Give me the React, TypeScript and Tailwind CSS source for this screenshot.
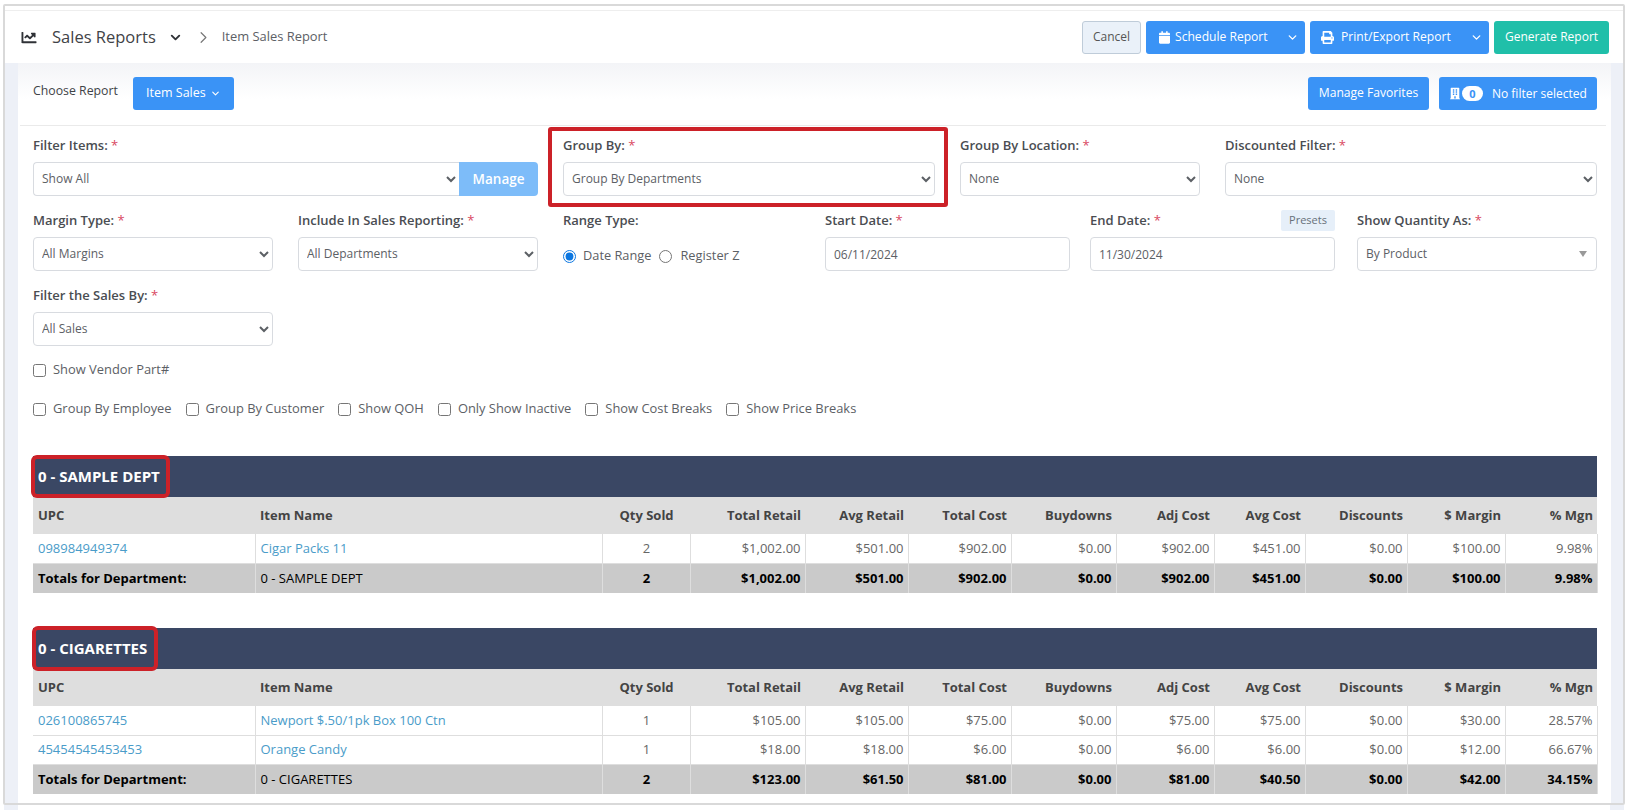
import { ChevronDown, ChevronRight } from "lucide-react";
import { FaBuilding, FaCalendar, FaChartLine, FaPrint } from "react-icons/fa";

const selectCls =
  "w-full h-[34px] pl-[4px] pr-[6px] pb-[2px] bg-white border border-[#d8dbe0] rounded-[4px] text-[12px] text-[#5c6065]";
const inputCls =
  "w-full h-[34px] pl-[8px] bg-white border border-[#d8dbe0] rounded-[4px] text-[12px] text-[#5c6065]";
const blueBtn = "h-[33px] bg-[#3a93f6] rounded-[3px] text-white";

const columns = [
  { label: "UPC", w: "w-[222px]", align: "text-left" },
  { label: "Item Name", w: "w-[347px]", align: "text-left" },
  { label: "Qty Sold", w: "w-[88px]", align: "text-center" },
  { label: "Total Retail", w: "w-[115px]", align: "text-right" },
  { label: "Avg Retail", w: "w-[103px]", align: "text-right" },
  { label: "Total Cost", w: "w-[103px]", align: "text-right" },
  { label: "Buydowns", w: "w-[105px]", align: "text-right" },
  { label: "Adj Cost", w: "w-[98px]", align: "text-right" },
  { label: "Avg Cost", w: "w-[91px]", align: "text-right" },
  { label: "Discounts", w: "w-[102px]", align: "text-right" },
  { label: "$ Margin", w: "w-[98px]", align: "text-right" },
  { label: "% Mgn", w: "w-[92px]", align: "text-right" },
];

const Req = () => <span className="text-[#d9485f] font-normal"> *</span>;

const Label = ({ text, req = true }: { text: string; req?: boolean }) => (
  <label className="block h-[18px] leading-[18px] text-[13px] font-semibold text-[#4a4d52] whitespace-nowrap">
    {text}
    {req && <Req />}
  </label>
);

const SelectField = ({ label, value, className }: { label: string; value: string; className: string }) => (
  <div className={className}>
    <Label text={label} />
    <select className={`${selectCls} mt-[8px]`} defaultValue={value}>
      <option>{value}</option>
    </select>
  </div>
);

const Check = ({ text }: { text: string }) => (
  <label className="flex items-center gap-[7px] h-[20px] text-[12.9px] text-[#5c6065] whitespace-nowrap">
    <input type="checkbox" className="w-[13px] h-[13px]" />
    {text}
  </label>
);

const Dept = ({
  title,
  rows,
  totals,
  titleCls,
}: {
  title: string;
  rows: string[][];
  totals: string[];
  titleCls: string;
}) => (
  <div>
    <div className="h-[41px] bg-[#3a4764] flex items-center">
      <span
        className={`${titleCls} flex items-center rounded-[2px] outline-[4px] outline-solid outline-[#cc2128] text-white text-[15px] font-bold whitespace-nowrap`}
      >
        {title}
      </span>
    </div>
    <table className="w-full table-fixed border-collapse text-[13px]">
      <thead>
        <tr className="h-[37px] bg-[#dedede] text-[#444]">
          {columns.map((c) => (
            <th key={c.label} className={`${c.w} ${c.align} font-bold pl-[5px] pr-[4px]`}>
              {c.label}
            </th>
          ))}
        </tr>
      </thead>
      <tbody>
        {rows.map((r) => (
          <tr key={r[0]} className="h-[29px] bg-white text-[#666] border-b border-[#dedede]">
            {r.map((v, i) => (
              <td
                key={i}
                className={`${columns[i].align} pl-[5px] pr-[4px] border-r border-[#dedede] ${i < 2 ? "text-[#4a9cc9]" : ""}`}
              >
                {v}
              </td>
            ))}
          </tr>
        ))}
        <tr className="h-[30px] bg-[#cacaca] text-black">
          {totals.map((v, i) => (
            <td
              key={i}
              className={`${columns[i].align} pl-[5px] pr-[4px] border-r border-[#dedede] ${i === 1 ? "font-normal" : "font-bold"}`}
            >
              {v}
            </td>
          ))}
        </tr>
      </tbody>
    </table>
  </div>
);

export default function App() {
  return (
    <div className="w-[1629px] h-[810px] overflow-hidden bg-white pt-[4px] pl-[3px] pr-[4px] font-['Open_Sans',sans-serif]">
      <div className="h-[801px] border-2 border-[#d9d9d9] rounded-[2px] flex flex-col">
        {/* top bar */}
        <div className="pt-[4px] bg-white">
          <div className="h-[53px] border-t border-[#eeeeee] pl-[15px] pr-[14px] flex items-center">
            <FaChartLine className="w-[18px] h-[15px] text-[#2f3237]" />
            <span className="ml-[14px] text-[16.5px] text-[#3f4347]">Sales Reports</span>
            <ChevronDown className="ml-[12px] w-[15px] h-[15px] text-[#2f3237]" strokeWidth={3} />
            <ChevronRight className="ml-[11px] w-[19px] h-[19px] text-[#777]" strokeWidth={1.5} />
            <span className="ml-[9px] text-[12.9px] text-[#5c6065]">Item Sales Report</span>
            <div className="ml-auto flex items-center gap-[5px]">
              <button className="w-[59px] h-[33px] bg-[#eaf1f9] border border-[#bfccd9] rounded-[3px] text-[12px] text-[#555]">
                Cancel
              </button>
              <button className={`${blueBtn} w-[159px] pl-[13px] pr-[6px] flex items-center`}>
                <FaCalendar className="w-[11px] h-[13px]" />
                <span className="ml-[5px] text-[12.1px]">Schedule Report</span>
                <ChevronDown className="ml-auto w-[13px] h-[13px]" strokeWidth={2.5} />
              </button>
              <button className={`${blueBtn} w-[179px] pl-[11px] pr-[6px] flex items-center`}>
                <FaPrint className="w-[13px] h-[13px]" />
                <span className="ml-[7px] text-[12.1px]">Print/Export Report</span>
                <ChevronDown className="ml-auto w-[13px] h-[13px]" strokeWidth={2.5} />
              </button>
              <button className="w-[115px] h-[33px] bg-[#20bfa9] rounded-[3px] text-white text-[12px]">
                Generate Report
              </button>
            </div>
          </div>
        </div>

        {/* page body */}
        <div className="flex-1 bg-[#edf0f7] pl-[13px] pr-[12px]">
          <div className="h-full bg-[linear-gradient(#f3f4f7,#ffffff_36px)]">
            <div className="ml-[2px] mr-[5px] pl-[13px] pr-[9px] pt-[14px] pb-[15px] border-b border-[#eaeaea] flex items-center">
              <span className="text-[12.3px] font-medium text-[#3f4347] -mt-[5px]">Choose Report</span>
              <button className={`${blueBtn} ml-[15px] w-[101px] flex items-center justify-center gap-[4px] text-[12.5px]`}>
                Item Sales
                <ChevronDown className="w-[11px] h-[11px]" strokeWidth={2.5} />
              </button>
              <button className={`${blueBtn} ml-auto w-[121px] text-[12.1px]`}>Manage Favorites</button>
              <button className={`${blueBtn} ml-[10px] w-[158px] pl-[11px] flex items-center text-[12px]`}>
                <FaBuilding className="w-[10px] h-[13px]" />
                <span className="ml-[2px] w-[21px] h-[15px] rounded-full bg-white text-[#3a93f6] text-[11px] font-bold leading-[15px]">
                  0
                </span>
                <span className="ml-[9px]">No filter selected</span>
              </button>
            </div>

            <div className="pl-[15px] pr-[14px] pt-[10px]">
              {/* row 1 */}
              <div className="flex gap-[25px]">
                <div className="w-[505px]">
                  <Label text="Filter Items:" />
                  <div className="mt-[8px] flex">
                    <select className={`${selectCls} rounded-r-none border-r-0`} defaultValue="Show All">
                      <option>Show All</option>
                    </select>
                    <button className="w-[79px] h-[34px] shrink-0 bg-[#7dbcf9] rounded-r-[4px] text-white text-[13.5px] font-semibold">
                      Manage
                    </button>
                  </div>
                </div>
                <div className="relative w-[372px]">
                  <div className="absolute -left-[15px] -right-[13px] -top-[9px] -bottom-[11px] border-[4px] border-[#cc2128] rounded-[3px] pointer-events-none" />
                  <Label text="Group By:" />
                  <select className={`${selectCls} mt-[8px]`} defaultValue="Group By Departments">
                    <option>Group By Departments</option>
                  </select>
                </div>
                <SelectField label="Group By Location:" value="None" className="w-[240px]" />
                <SelectField label="Discounted Filter:" value="None" className="w-[372px]" />
              </div>

              {/* row 2 */}
              <div className="mt-[15px] flex">
                <SelectField label="Margin Type:" value="All Margins" className="w-[240px]" />
                <SelectField label="Include In Sales Reporting:" value="All Departments" className="ml-[25px] w-[240px]" />
                <div className="ml-[25px] w-[240px]">
                  <Label text="Range Type:" req={false} />
                  <div className="mt-[8px] h-[34px] pt-[4px] flex items-center text-[12.8px] text-[#5c6065]">
                    <input type="radio" name="range" defaultChecked className="w-[13px] h-[13px] accent-[#0b76e0]" />
                    <span className="ml-[7px]">Date Range</span>
                    <input type="radio" name="range" className="ml-[8px] w-[13px] h-[13px]" />
                    <span className="ml-[8px]">Register Z</span>
                  </div>
                </div>
                <div className="ml-[22px] w-[245px]">
                  <Label text="Start Date:" />
                  <input className={`${inputCls} mt-[8px]`} defaultValue="06/11/2024" />
                </div>
                <div className="ml-[20px] w-[245px]">
                  <div className="h-[18px] flex items-center justify-between">
                    <Label text="End Date:" />
                    <button className="w-[54px] h-[21px] bg-[#e6eff9] rounded-[2px] text-[11px] text-[#66707a]">
                      Presets
                    </button>
                  </div>
                  <input className={`${inputCls} mt-[8px]`} defaultValue="11/30/2024" />
                </div>
                <div className="ml-[22px] w-[240px]">
                  <Label text="Show Quantity As:" />
                  <div className="mt-[8px] h-[34px] pl-[8px] pr-[9px] bg-white border border-[#d8dbe0] rounded-[4px] flex items-center justify-between text-[12px] text-[#5c6065]">
                    By Product
                    <span className="border-x-[4px] border-x-transparent border-t-[6px] border-t-[#999]" />
                  </div>
                </div>
              </div>

              {/* row 3 */}
              <div className="mt-[15px]">
                <SelectField label="Filter the Sales By:" value="All Sales" className="w-[240px]" />
              </div>

              <div className="mt-[14px]">
                <Check text="Show Vendor Part#" />
              </div>
              <div className="mt-[19px] flex gap-[14px]">
                <Check text="Group By Employee" />
                <Check text="Group By Customer" />
                <Check text="Show QOH" />
                <Check text="Only Show Inactive" />
                <Check text="Show Cost Breaks" />
                <Check text="Show Price Breaks" />
              </div>

              <div className="mt-[37px] flex flex-col gap-[35px]">
                <Dept
                  title="0 - SAMPLE DEPT"
                  titleCls="h-[35px] ml-[2px] pl-[3px] pr-[6px]"
                  rows={[
                    ["098984949374", "Cigar Packs 11", "2", "$1,002.00", "$501.00", "$902.00", "$0.00", "$902.00", "$451.00", "$0.00", "$100.00", "9.98%"],
                  ]}
                  totals={["Totals for Department:", "0 - SAMPLE DEPT", "2", "$1,002.00", "$501.00", "$902.00", "$0.00", "$902.00", "$451.00", "$0.00", "$100.00", "9.98%"]}
                />
                <Dept
                  title="0 - CIGARETTES"
                  titleCls="h-[37px] ml-[3px] pl-[2px] pr-[7px]"
                  rows={[
                    ["026100865745", "Newport $.50/1pk Box 100 Ctn", "1", "$105.00", "$105.00", "$75.00", "$0.00", "$75.00", "$75.00", "$0.00", "$30.00", "28.57%"],
                    ["45454545453453", "Orange Candy", "1", "$18.00", "$18.00", "$6.00", "$0.00", "$6.00", "$6.00", "$0.00", "$12.00", "66.67%"],
                  ]}
                  totals={["Totals for Department:", "0 - CIGARETTES", "2", "$123.00", "$61.50", "$81.00", "$0.00", "$81.00", "$40.50", "$0.00", "$42.00", "34.15%"]}
                />
              </div>
            </div>
          </div>
        </div>
      </div>
      {/* strips under the frame */}
      <div className="h-[5px] flex justify-between px-[1px]">
        <div className="w-[14px] bg-[#edf0f7]" />
        <div className="w-[14px] bg-[#edf0f7]" />
      </div>
    </div>
  );
}
